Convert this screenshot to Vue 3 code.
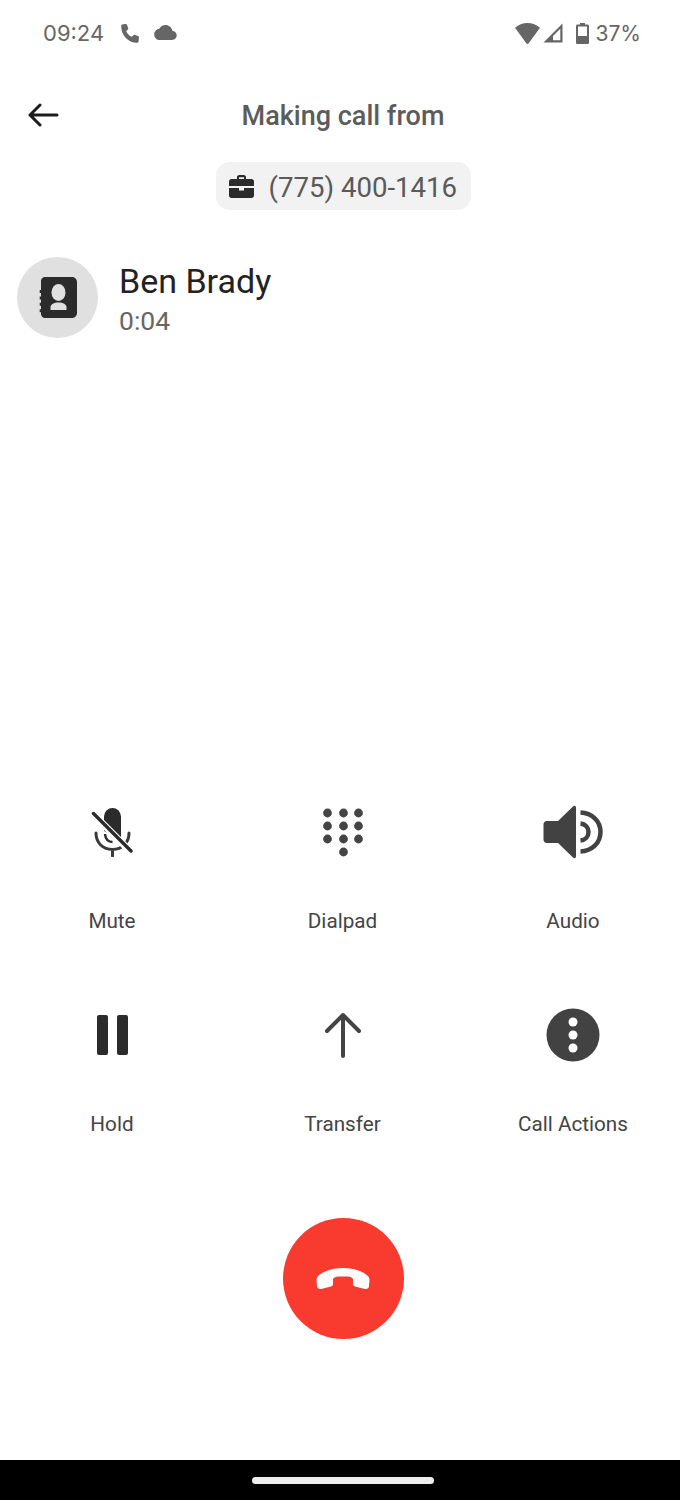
<template>
  <div class="screen">
    <header class="status">
      <div class="status-left">
        <span class="clock">09:24</span>
        <svg class="ic-call" viewBox="0 0 24 24"><path d="M4.600 1.500 8 1.200c.5 0 .8.2 1 .6l1.500 4.200c.2.400.1.800-.2 1.100L8.200 9.300c1.300 2.900 3.600 5.200 6.500 6.500l2.200-2.100c.3-.3.700-.4 1.100-.2l4.200 1.500c.4.200.6.500.6 1l-.3 3.800c-.1 2.200-.7 2.900-1.900 2.900C10 22.500 2.500 14 2.500 3.500c0-1.200.9-1.900 2.100-2z" /></svg>
        <svg class="ic-cloud" viewBox="0 0 24 16"><path d="M19.350 6.040C18.670 2.590 15.640 0 12 0 9.110 0 6.600 1.640 5.350 4.040 2.340 4.360 0 6.910 0 10c0 3.310 2.690 6 6 6h13c2.760 0 5-2.240 5-5 0-2.640-2.050-4.780-4.650-4.960z" /></svg>
      </div>
      <div class="status-right">
        <svg class="ic-wifi" viewBox="0 0 25 21"><path d="M12.500 0C7.700 0 3.400 1.800 0 4.800L11.300 20.300c.6.900 1.800.9 2.400 0L25 4.800C21.600 1.800 17.300 0 12.500 0z" /></svg>
        <svg class="ic-signal" viewBox="0 0 20 20"><path d="M19.500 0.500V19.500H0.500z M17.300 5.700 10 13V17.300H17.300z" fill-rule="evenodd" /></svg>
        <svg class="ic-battery" viewBox="0 0 13 21"><path d="M4 0h5v1.600h2.400c.9 0 1.600.7 1.600 1.600v16.200c0 .9-.7 1.600-1.600 1.600H1.600C.7 21 0 20.300 0 19.400V3.200c0-.9.7-1.600 1.600-1.600H4zM2 3.600V13h9V3.600z" fill-rule="evenodd" /></svg>
        <span class="battery-level">37%</span>
      </div>
    </header>

    <section class="call-from">
      <div class="title-row">
        <button class="back" aria-label="Back">
          <svg viewBox="0 0 32 24"><path d="M30 12H3M13 2 3 12l10 10" /></svg>
        </button>
        <h1 class="title">Making call from</h1>
      </div>
      <div class="chip">
        <svg class="ic-work" viewBox="0 0 25 23"><path d="M8 4V2.200C8 1 9 0 10.200 0h4.600C16 0 17 1 17 2.200V4h5.500C23.900 4 25 5.100 25 6.500V11H0V6.500C0 5.100 1.100 4 2.500 4zM10 2.200V4h5V2.200z" fill-rule="evenodd" /><path d="M0 13h10v2.500h5V13h10v7.500c0 1.400-1.100 2.500-2.500 2.500h-20C1.100 23 0 21.900 0 20.500z" /></svg>
        <span class="chip-number">(775) 400-1416</span>
      </div>
    </section>

    <section class="contact">
      <div class="avatar">
        <svg viewBox="0 0 38 41"><path d="M6 0h27c2.800 0 5 2.200 5 5v31c0 2.800-2.200 5-5 5H6c-2.300 0-4-1.800-4-4v-1.800H.7v-3H2v-3.400H.7v-3H2v-3.400H.7v-3H2v-3.400H.7v-3H2V4c0-2.200 1.700-4 4-4z" /><ellipse cx="19.500" cy="15.500" rx="7" ry="8.500" fill="#e0e0e0" /><path d="M11.500 33v-3c0-2.700 3.500-4.500 8-4.500s8 1.800 8 4.500v3z" fill="#e0e0e0" /></svg>
      </div>
      <div class="contact-text">
        <div class="name">Ben Brady</div>
        <div class="timer">0:04</div>
      </div>
    </section>

    <section class="controls">
      <div class="action" v-for="item in actions" :key="item">
        <div class="action-icon">
          <svg v-if="item === 'Mute'" width="42" height="50" viewBox="0 0 42 50">
            <path fill="#2b2b2b" d="M13 24V9.500a8.500 8.500 0 0 1 17 0V33z" />
            <path fill="none" stroke="#3a3a3a" stroke-width="3" stroke-linecap="round" d="M5 26c0 10 7 16.500 16.500 16.500S38 36 38 26M21.500 43v6" />
            <path fill="none" stroke="#2b2b2b" stroke-width="2.500" d="M14 27c.5 5 3 8 7.500 8" />
            <path stroke="#fff" stroke-width="7" d="M3 8l36 36" />
            <path stroke="#2b2b2b" stroke-width="3.400" stroke-linecap="round" d="M2.500 6.500l37.500 37.500" />
          </svg>
          <svg v-else-if="item === 'Dialpad'" width="44" height="52" viewBox="0 0 44 52" fill="#444">
            <template v-for="cy in [7, 20, 33]" :key="cy">
              <circle v-for="cx in [6.500, 22.500, 37.500]" :key="cx" :cx="cx" :cy="cy" r="4.400" />
            </template>
            <circle cx="22.500" cy="46" r="4.400" />
          </svg>
          <svg v-else-if="item === 'Audio'" width="60" height="54" viewBox="0 0 60 54">
            <path fill="#424242" d="M30 1.500c1.500-1.300 3-.5 3 1.500v48c0 2-1.500 2.800-3 1.500L15 38H4c-2.200 0-3.500-1.400-3.500-3.500v-15C.5 17.400 1.800 16 4 16h11z" />
            <path fill="none" stroke="#424242" stroke-width="4.500" d="M37.500 7.500C49 8 57.500 16 57.500 27S49 46 37.500 46.500M37.500 18.500c4.800.5 8 4 8 8.500s-3.200 8-8 8.500" />
          </svg>
          <svg v-else-if="item === 'Hold'" width="32" height="40" viewBox="0 0 32 40" fill="#2b2b2b">
            <rect x="1" y="0" width="11" height="40" rx="2" />
            <rect x="21" y="0" width="11" height="40" rx="2" />
          </svg>
          <svg v-else-if="item === 'Transfer'" width="38" height="46" viewBox="0 0 38 46" fill="none" stroke="#444" stroke-width="4" stroke-linecap="round" stroke-linejoin="round">
            <path d="M19 44V3M3 19 19 3l16 16" />
          </svg>
          <svg v-else width="54" height="54" viewBox="0 0 54 54">
            <circle cx="27" cy="27" r="26.500" fill="#424242" />
            <circle cx="27" cy="14" r="4.500" fill="#fff" />
            <circle cx="27" cy="27" r="4.500" fill="#fff" />
            <circle cx="27" cy="40" r="4.500" fill="#fff" />
          </svg>
        </div>
        <div class="action-label">{{ item === 'Actions' ? 'Call Actions' : item }}</div>
      </div>
    </section>

    <button class="hangup" aria-label="End call">
      <svg viewBox="0 0 54 22" width="54" height="22"><path fill="#fff" d="M.5 11C1 9 2 8 4 6.500 10 2 18 0 27 0c9 0 17 2 23 6.500 2 1.500 3 2.500 3.500 4.500L53 18c0 2-2 3.500-4 3l-10-2.500c-1.500-.5-2-1.500-2-2.500v-5c-1-1.500-3-2.500-5-2.500H22c-2 0-4 1-5 2.500v5c0 1-.5 2-2 2.500L5 21c-2 .5-4-1-4-3z" /></svg>
    </button>

    <footer class="nav-bar">
      <div class="nav-pill"></div>
    </footer>
  </div>
</template>

<script setup>
const actions = ['Mute', 'Dialpad', 'Audio', 'Hold', 'Transfer', 'Actions']
</script>

<style scoped>
.screen {
  width: 680px;
  height: 1500px;
  display: flex;
  flex-direction: column;
  background: #fff;
  font-family: Roboto, "Liberation Sans", sans-serif;
  overflow: hidden;
}

.status {
  height: 66px;
  flex: none;
  display: flex;
  align-items: center;
  justify-content: space-between;
  padding: 0 39px 0 43px;
  color: #666;
  font-family: Inter, Roboto, sans-serif;
  font-size: 22px;
}

.status svg {
  fill: #666;
  display: block;
}

.status-left,
.status-right {
  display: flex;
  align-items: center;
}

.clock {
  width: 76px;
}

.ic-call {
  width: 21px;
  height: 21px;
}

.ic-cloud {
  width: 23px;
  height: 15px;
  margin-left: 14px;
  margin-top: -1px;
}

.ic-wifi {
  width: 25px;
  height: 21px;
}

.ic-signal {
  width: 20px;
  height: 20px;
  margin-left: 3px;
}

.ic-battery {
  width: 13px;
  height: 21px;
  margin-left: 13px;
}

.battery-level {
  margin-left: 7px;
  font-size: 21px;
}

.call-from {
  flex: none;
  display: flex;
  flex-direction: column;
  align-items: center;
  padding-left: 6px;
}

.title-row {
  position: relative;
  width: 100%;
  height: 48px;
  margin-top: 25px;
  display: flex;
  align-items: center;
  justify-content: center;
}

.back {
  position: absolute;
  left: 21px;
  top: 12px;
  width: 32px;
  height: 24px;
  padding: 0;
  border: 0;
  background: none;
}

.back svg {
  display: block;
  width: 32px;
  height: 24px;
  fill: none;
  stroke: #1c1c1c;
  stroke-width: 3;
  stroke-linecap: round;
  stroke-linejoin: round;
}

.title {
  margin: 0;
  padding-top: 1px;
  font-size: 27px;
  font-weight: 500;
  color: #5c5c5c;
}

.chip {
  height: 48px;
  width: 255px;
  margin-top: 23px;
  box-sizing: border-box;
  padding-left: 13px;
  display: flex;
  align-items: center;
  gap: 15px;
  border-radius: 14px;
  background: #f2f2f2;
  font-size: 27.6px;
  color: #5a5a5a;
  white-space: nowrap;
}

.chip-number {
  padding-top: 2px;
}

.ic-work {
  width: 25px;
  height: 23px;
  fill: #2b2b2b;
}

.contact {
  flex: none;
  display: flex;
  align-items: flex-start;
  gap: 21px;
  padding-left: 17px;
  margin-top: 47px;
}

.avatar {
  width: 81px;
  height: 81px;
  flex: none;
  border-radius: 50%;
  background: #e0e0e0;
  display: flex;
  align-items: center;
  justify-content: center;
}

.avatar svg {
  width: 38px;
  height: 41px;
  fill: #2b2b2b;
}

.contact-text {
  padding-top: 2px;
}

.name {
  font-size: 34px;
  line-height: 44px;
  color: #222;
}

.timer {
  font-size: 26.5px;
  line-height: 36px;
  color: #666;
}

.controls {
  flex: none;
  display: grid;
  grid-template-columns: repeat(3, 220px);
  column-gap: 10.5px;
  row-gap: 72px;
  padding-left: 2px;
  margin-top: 463px;
}

.action {
  display: flex;
  flex-direction: column;
  align-items: center;
}

.action-icon {
  height: 60px;
  display: flex;
  align-items: center;
  justify-content: center;
}

.action-label {
  height: 24px;
  line-height: 24px;
  margin-top: 47px;
  font-size: 20.7px;
  color: #444;
}

.hangup {
  flex: none;
  align-self: center;
  width: 121px;
  height: 121px;
  margin: 82px 0 0 6px;
  padding: 0;
  border: 0;
  border-radius: 50%;
  background: #f93a2f;
  display: flex;
  align-items: center;
  justify-content: center;
}

.nav-bar {
  margin-top: auto;
  flex: none;
  height: 40px;
  background: #000;
  display: flex;
  justify-content: center;
  padding: 17px 0 0 6px;
  box-sizing: border-box;
}

.nav-pill {
  width: 182px;
  height: 7px;
  border-radius: 4px;
  background: #eee;
}
</style>
